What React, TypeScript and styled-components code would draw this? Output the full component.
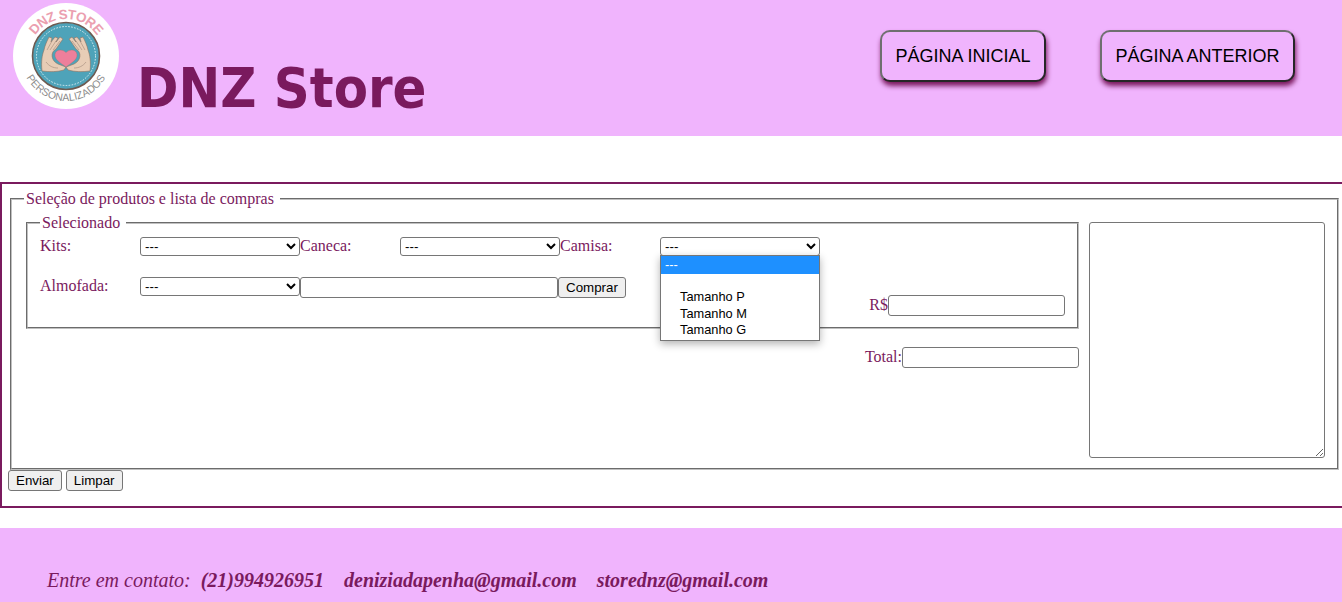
import React from 'react'
import styled, { createGlobalStyle } from 'styled-components'

const purple = '#7a1a5e'
const lilac = '#f0b4fd'

const handOutline =
  'M42 71 C41 62 42 55 44 50 C45 45 47 41 49 37 L52 38 L51 42 L55 37 L58 38 L56 42 L60 37 L63 39 C60 43 58 46 56 49 C50 52 51 61 58 64 L66 67 L64 70 C57 72 50 72 42 71 Z'
const handCreases = 'M47 50 L52 41 M50 50 L56 41 M53 50 L60 41 M46 62 C49 66 53 68 58 68'

const Hand = () => (
  <>
    <path d={handOutline} fill="#e8cdb6" stroke="#8b7161" strokeWidth="0.6" />
    <path d={handCreases} fill="none" stroke="#a08878" strokeWidth="0.6" />
  </>
)

const Logo = () => (
  <LogoSvg viewBox="13 3 106 106">
    <defs>
      <path id="logoTop" d="M29 56 A37 37 0 0 1 103 56" />
      <path id="logoBottom" d="M21 56 A45 45 0 0 0 111 56" />
    </defs>
    <circle cx="66" cy="56" r="53" fill="#fff" />
    <text fontFamily="'Liberation Sans', sans-serif" fontWeight="700" fontSize="13.5" letterSpacing="-0.6" fill="#eb9fb0">
      <textPath href="#logoTop" startOffset="50%" textAnchor="middle">DNZ STORE</textPath>
    </text>
    <text fontFamily="'Liberation Sans', sans-serif" fontSize="10.5" fill="#8d8d8d">
      <textPath href="#logoBottom" startOffset="50%" textAnchor="middle">PERSONALIZADOS</textPath>
    </text>
    <circle cx="66" cy="56" r="33.5" fill="#4ea3b9" stroke="#6d5a50" strokeWidth="1.6" />
    <circle cx="66" cy="56" r="29.5" fill="none" stroke="#e8f4f6" strokeWidth="0.9" strokeDasharray="1.6 1.4" />
    <Hand />
    <g transform="translate(132 0) scale(-1 1)">
      <Hand />
    </g>
    <path
      d="M66 67 C61 63 54.500 60 55 54.500 C55.500 49.500 62 48.500 66 52.500 C70 48.500 76.500 49.500 77 54.500 C77.500 60 71 63 66 67 Z"
      fill="#ee7f9b"
      stroke="#a07a70"
      strokeWidth="0.4"
    />
  </LogoSvg>
)

const App = () => {
  return (
    <>
      <GlobalStyle />
      <Header>
        <Logo />
        <Title>DNZ Store</Title>
        <Nav>
          <NavButton $width={166}>PÁGINA INICIAL</NavButton>
          <NavButton $width={195}>PÁGINA ANTERIOR</NavButton>
        </Nav>
      </Header>
      <Form onSubmit={(e) => e.preventDefault()}>
        <ListFieldset>
          <Legend>Seleção de produtos e lista de compras</Legend>
          <LeftColumn>
            <SelectedFieldset>
              <SmallLegend>Selecionado</SmallLegend>
              <Row>
                <FieldLabel>Kits:</FieldLabel>
                <ProductSelect><option>---</option></ProductSelect>
                <FieldLabel>Caneca:</FieldLabel>
                <ProductSelect><option>---</option></ProductSelect>
                <FieldLabel>Camisa:</FieldLabel>
                <SelectWrap>
                  <ProductSelect><option>---</option></ProductSelect>
                  <Dropdown>
                    <ActiveOption>---</ActiveOption>
                    <GroupLabel />
                    <Option>Tamanho P</Option>
                    <Option>Tamanho M</Option>
                    <Option>Tamanho G</Option>
                  </Dropdown>
                </SelectWrap>
              </Row>
              <BottomRow>
                <FieldLabel>Almofada:</FieldLabel>
                <ProductSelect><option>---</option></ProductSelect>
                <NameInput type="text" />
                <FormButton type="button">Comprar</FormButton>
                <PriceGroup>
                  <SumLabel>R$</SumLabel>
                  <MoneyInput type="text" />
                </PriceGroup>
              </BottomRow>
            </SelectedFieldset>
            <TotalRow>
              <SumLabel>Total:</SumLabel>
              <MoneyInput type="text" />
            </TotalRow>
          </LeftColumn>
          <ListArea />
        </ListFieldset>
        <Actions>
          <FormButton type="submit">Enviar</FormButton>
          <FormButton type="reset">Limpar</FormButton>
        </Actions>
      </Form>
      <Footer>
        <ContactText>
          Entre em contato:&nbsp;&nbsp;
          <b>(21)994926951</b>&nbsp;&nbsp;&nbsp;&nbsp;
          <b>deniziadapenha@gmail.com</b>&nbsp;&nbsp;&nbsp;&nbsp;
          <b>storednz@gmail.com</b>
        </ContactText>
      </Footer>
    </>
  )
}

export default App

const GlobalStyle = createGlobalStyle`
  html, body {
    margin: 0;
    padding: 0;
    background: #fff;
    overflow: hidden;
  }
  body {
    font-family: "Liberation Serif", "Times New Roman", serif;
    font-size: 16px;
  }
`

const Header = styled.header`
  height: 136px;
  background: ${lilac};
  display: flex;
  align-items: flex-start;
  padding: 3px 47px 0 13px;
  box-sizing: border-box;
`

const LogoSvg = styled.svg`
  width: 106px;
  height: 106px;
  flex: none;
`

const Title = styled.h1`
  margin: 52px 0 0 18px;
  flex: none;
  font-family: "DejaVu Sans", sans-serif;
  font-stretch: condensed;
  font-size: 55.5px;
  line-height: 66px;
  font-weight: 700;
  color: ${purple};
  white-space: nowrap;
`

const Nav = styled.nav`
  margin: 27px 0 0 auto;
  display: flex;
  gap: 54px;
`

const NavButton = styled.button<{ $width: number }>`
  width: ${(p) => p.$width}px;
  height: 52px;
  padding: 0;
  background: ${lilac};
  border: 2px solid;
  border-color: #6f6f6f #262626 #262626 #6f6f6f;
  border-radius: 10px;
  box-shadow: 1px 4px 5px ${purple};
  font-family: "Liberation Sans", Arial, sans-serif;
  font-size: 18px;
  color: #000;
`

const Form = styled.form`
  margin: 46px 0 20px;
  height: 326px;
  box-sizing: border-box;
  border: solid ${purple};
  border-width: 2px 0 2px 2px;
  padding: 6px 3px 0 6px;
`

const ListFieldset = styled.fieldset`
  margin: 0 0 0 2px;
  padding: 14px 12px 10px 14px;
  min-width: 0;
  display: flex;
  gap: 10px;
  border: 2px groove #c0c0c0;
`

const Legend = styled.legend`
  margin-left: -2px;
  padding: 0 6px 0 2px;
  color: ${purple};
  font-size: 16px;
`

const LeftColumn = styled.div`
  flex: 1;
  min-width: 0;
`

const SelectedFieldset = styled.fieldset`
  margin: -8px 0 0 0;
  padding: 5px 12px 11px 12px;
  min-width: 0;
  border: 2px groove #c0c0c0;
`

const SmallLegend = styled.legend`
  padding: 0 6px 0 2px;
  color: ${purple};
  font-size: 16px;
`

const Row = styled.div`
  display: flex;
  align-items: flex-start;
`

const BottomRow = styled(Row)`
  margin-top: 21px;
`

const FieldLabel = styled.label`
  width: 100px;
  flex: none;
  color: ${purple};
  line-height: 18px;
`

const SelectWrap = styled.div`
  position: relative;
  display: flex;
`

const ProductSelect = styled.select`
  width: 160px;
  height: 19px;
  flex: none;
  box-sizing: border-box;
  padding: 0;
  background: #fff;
  border: 1px solid #767676;
  border-radius: 3px;
  font-family: "Liberation Sans", Arial, sans-serif;
  font-size: 13.33px;
  color: #000;
`

const Dropdown = styled.div`
  position: absolute;
  top: 18px;
  left: 0;
  width: 160px;
  height: 86px;
  box-sizing: border-box;
  background: #fff;
  border: 1px solid #767676;
  box-shadow: 0 3px 8px rgba(0, 0, 0, 0.3);
  font-family: "Liberation Sans", Arial, sans-serif;
  font-size: 12.8px;
  color: #000;
  z-index: 2;
`

const ActiveOption = styled.div`
  height: 18px;
  line-height: 18px;
  padding-left: 4px;
  background: #1e90ff;
  color: #fff;
`

const GroupLabel = styled.div`
  height: 15px;
`

const Option = styled.div`
  height: 16.5px;
  line-height: 16.5px;
  padding-left: 19px;
`

const NameInput = styled.input`
  width: 258px;
  height: 21px;
  flex: none;
  box-sizing: border-box;
  padding: 1px 2px;
  background: #fff;
  border: 1px solid #767676;
  border-radius: 3px;
`

const FormButton = styled.button`
  height: 21px;
  box-sizing: border-box;
  padding: 1px 7px;
  flex: none;
  background: #efefef;
  border: 1px solid #767676;
  border-radius: 3px;
  font-family: "Liberation Sans", Arial, sans-serif;
  font-size: 13.33px;
  color: #000;
`

const PriceGroup = styled.div`
  margin: 18px 0 0 auto;
  display: flex;
  align-items: flex-start;
`

const SumLabel = styled.label`
  color: ${purple};
  line-height: 20px;
`

const MoneyInput = styled.input`
  width: 177px;
  height: 21px;
  box-sizing: border-box;
  padding: 1px 2px;
  background: #fff;
  border: 1px solid #767676;
  border-radius: 3px;
`

const TotalRow = styled.div`
  margin-top: 18px;
  display: flex;
  justify-content: flex-end;
  align-items: flex-start;
`

const ListArea = styled.textarea`
  width: 236px;
  height: 236px;
  flex: none;
  box-sizing: border-box;
  padding: 2px;
  background: #fff;
  border: 1px solid #767676;
  border-radius: 3px;
`

const Actions = styled.div`
  display: flex;
  gap: 4px;
`

const Footer = styled.footer`
  height: 74px;
  box-sizing: border-box;
  padding: 41px 0 0 47px;
  background: ${lilac};
`

const ContactText = styled.p`
  margin: 0;
  color: ${purple};
  font-size: 20px;
  font-style: italic;
  line-height: 23px;
  white-space: nowrap;
`
